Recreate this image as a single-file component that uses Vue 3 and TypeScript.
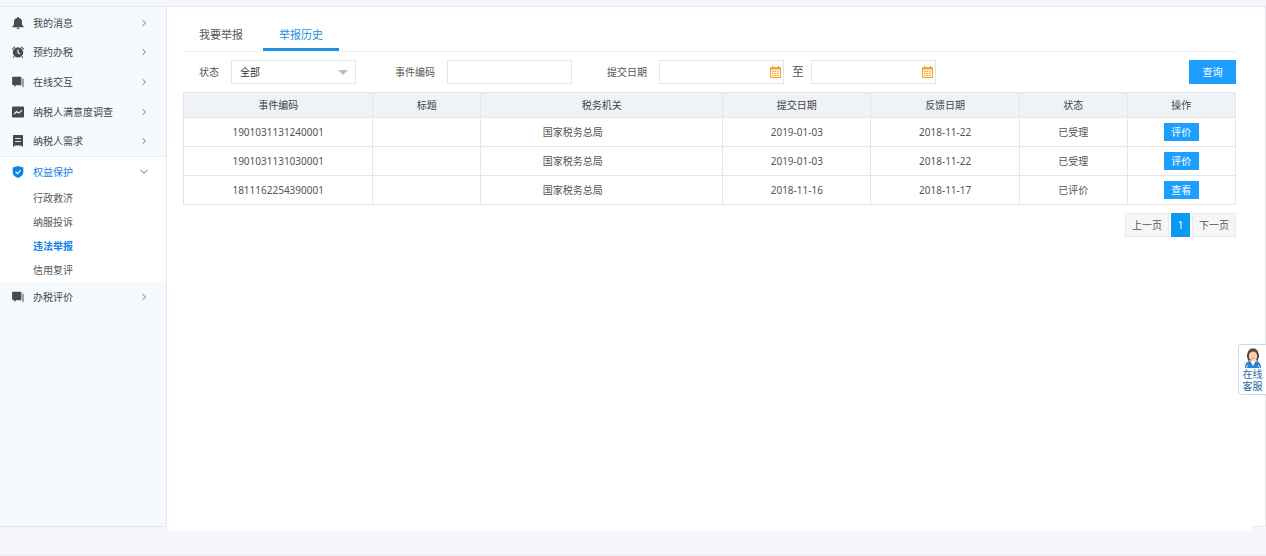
<script setup lang="ts">
import { ref } from 'vue'

type IconName = 'bell' | 'clock' | 'chat' | 'chart' | 'book'

interface MenuItem {
  label: string
  icon: IconName
}

interface Report {
  code: string
  title: string
  agency: string
  submitted: string
  replied: string
  status: string
  action: string
}

const menu: MenuItem[] = [
  { label: '我的消息', icon: 'bell' },
  { label: '预约办税', icon: 'clock' },
  { label: '在线交互', icon: 'chat' },
  { label: '纳税人满意度调查', icon: 'chart' },
  { label: '纳税人需求', icon: 'book' },
]

const submenu: string[] = ['行政救济', '纳服投诉', '违法举报', '信用复评']
const currentSub = ref('违法举报')

const tabs: string[] = ['我要举报', '举报历史']
const currentTab = ref('举报历史')

const status = ref('全部')
const eventCode = ref('')
const dateFrom = ref('')
const dateTo = ref('')

const columns: string[] = ['事件编码', '标题', '税务机关', '提交日期', '反馈日期', '状态', '操作']

const reports: Report[] = [
  { code: '1901031131240001', title: '', agency: '国家税务总局', submitted: '2019-01-03', replied: '2018-11-22', status: '已受理', action: '评价' },
  { code: '1901031131030001', title: '', agency: '国家税务总局', submitted: '2019-01-03', replied: '2018-11-22', status: '已受理', action: '评价' },
  { code: '1811162254390001', title: '', agency: '国家税务总局', submitted: '2018-11-16', replied: '2018-11-17', status: '已评价', action: '查看' },
]
</script>

<template>
  <div class="page">
    <div class="shell">
      <aside class="sidebar">
        <nav class="menu">
          <div class="menu-group">
            <a v-for="item in menu" :key="item.label" href="#" class="menu-item">
              <svg class="menu-icon" viewBox="0 0 12 12" aria-hidden="true">
                <g v-if="item.icon === 'bell'" fill="#4a4a4a">
                  <path d="M6 0a1 1 0 0 1 1 .9C9 1.300 10 2.800 10 4.600v3.200l1.600 1.600v.8H.4v-.8L2 7.800V4.600C2 2.800 3 1.300 5 .9A1 1 0 0 1 6 0z" />
                  <path d="M4.500 10.700h3a1.500 1.300 0 0 1-3 0z" />
                </g>
                <g v-else-if="item.icon === 'clock'">
                  <circle cx="6" cy="6.400" r="5.200" fill="#4a4a4a" />
                  <path d="M.4 3.400A6 6 0 0 1 3 .7M9 .7a6 6 0 0 1 2.600 2.700M2.200 10.300l-1.200 1.300M9.800 10.300l1.200 1.300" fill="none" stroke="#5a5a5a" stroke-width="1.200" />
                  <path d="M6 3.500v3.200l2 1.300" fill="none" stroke="#f5fafd" stroke-width="1.100" />
                </g>
                <g v-else-if="item.icon === 'chat'">
                  <path d="M.8.800h7.900a.7.7 0 0 1 .7.700v6.700a.7.7 0 0 1-.7.700H4.500L2.200 11V8.900H.8a.7.700 0 0 1-.7-.7V1.500A.7.700 0 0 1 .8.800z" fill="#4a4a4a" />
                  <path d="M10.200 2.500h.9a.7.7 0 0 1 .7.700v8.400l-2-1.600H5.600v-.4h4.600z" fill="#8b8e90" />
                </g>
                <g v-else-if="item.icon === 'chart'">
                  <rect x="0" y=".5" width="12" height="11" rx=".8" fill="#4a4a4a" />
                  <path d="M2 8l2.600-2.500 2.200 1.600L10 4.300" fill="none" stroke="#f5fafd" stroke-width="1.100" />
                </g>
                <g v-else>
                  <path d="M1.700 0h8.600a.7.7 0 0 1 .7.700V12L8.800 10.400H3.200L1 12V.7A.7.700 0 0 1 1.700 0z" fill="#4a4a4a" />
                  <path d="M3.200 3.500h5.600M3.200 6.500h5.600" stroke="#dfe4e8" stroke-width="1" />
                </g>
              </svg>
              <span class="menu-label">{{ item.label }}</span>
              <svg class="chevron" viewBox="0 0 8 8" aria-hidden="true"><path d="M2.500 1.200L5.500 4l-3 2.800" /></svg>
            </a>
          </div>
          <div class="menu-open">
            <a href="#" class="menu-item menu-item-active">
              <svg class="menu-icon" viewBox="0 0 12 12" aria-hidden="true">
                <path d="M6 0l5.300 1.600v4.700c0 2.700-2.300 4.700-5.300 5.700-3-1-5.300-3-5.300-5.700V1.600z" fill="#0f82e6" />
                <path d="M3.600 5.900l1.800 1.800 3.200-3.300" fill="none" stroke="#fff" stroke-width="1.200" />
              </svg>
              <span class="menu-label">权益保护</span>
              <svg class="chevron" viewBox="0 0 8 8" aria-hidden="true"><path d="M.5 2L4 5.300 7.500 2" /></svg>
            </a>
            <a
              v-for="name in submenu"
              :key="name"
              href="#"
              class="sub-item"
              :class="{ 'sub-item-active': name === currentSub }"
              @click.prevent="currentSub = name"
            >{{ name }}</a>
          </div>
          <a href="#" class="menu-item">
            <svg class="menu-icon" viewBox="0 0 12 12" aria-hidden="true">
              <path d="M.8.800h7.900a.7.7 0 0 1 .7.700v6.700a.7.7 0 0 1-.7.700H4.500L2.200 11V8.900H.8a.7.700 0 0 1-.7-.7V1.500A.7.700 0 0 1 .8.800z" fill="#4a4a4a" />
              <path d="M10.200 2.500h.9a.7.7 0 0 1 .7.700v8.400l-2-1.600H5.600v-.4h4.600z" fill="#8b8e90" />
            </svg>
            <span class="menu-label">办税评价</span>
            <svg class="chevron" viewBox="0 0 8 8" aria-hidden="true"><path d="M2.500 1.200L5.500 4l-3 2.800" /></svg>
          </a>
        </nav>
      </aside>

      <main class="content">
        <div class="tabs">
          <button
            v-for="tab in tabs"
            :key="tab"
            type="button"
            class="tab"
            :class="{ 'tab-active': tab === currentTab }"
            @click="currentTab = tab"
          >{{ tab }}</button>
        </div>

        <form class="filters" @submit.prevent>
          <div class="field field-status">
            <label for="status">状态</label>
            <span class="control">
              <select id="status" v-model="status" class="box">
                <option>全部</option>
                <option>已受理</option>
                <option>已评价</option>
              </select>
              <svg class="caret" viewBox="0 0 10 5" aria-hidden="true"><path d="M0 0h10L5 5z" fill="#bdbdbd" /></svg>
            </span>
          </div>
          <div class="field field-code">
            <label for="code">事件编码</label>
            <span class="control"><input id="code" v-model="eventCode" type="text" class="box" /></span>
          </div>
          <div class="field">
            <label for="from">提交日期</label>
            <span class="control">
              <input id="from" v-model="dateFrom" type="text" class="box" />
              <svg class="calendar" viewBox="0 0 11 12" aria-hidden="true">
                <rect x=".5" y="1.500" width="10" height="10" fill="#fff1cf" stroke="#f0a63c" />
                <path d="M0 1h11v2.500H0z" fill="#f0a63c" />
                <path d="M2.500 0v2M8.500 0v2" stroke="#f0a63c" />
                <path d="M2 5.500h7M2 7.500h7M2 9.500h7" stroke="#f0a63c" stroke-width="1" stroke-dasharray="1.500 1" />
              </svg>
            </span>
          </div>
          <div class="range">
            <label for="to">至</label>
            <span class="control">
              <input id="to" v-model="dateTo" type="text" class="box" />
              <svg class="calendar" viewBox="0 0 11 12" aria-hidden="true">
                <rect x=".5" y="1.500" width="10" height="10" fill="#fff1cf" stroke="#f0a63c" />
                <path d="M0 1h11v2.500H0z" fill="#f0a63c" />
                <path d="M2.500 0v2M8.500 0v2" stroke="#f0a63c" />
                <path d="M2 5.500h7M2 7.500h7M2 9.500h7" stroke="#f0a63c" stroke-width="1" stroke-dasharray="1.500 1" />
              </svg>
            </span>
          </div>
          <button type="submit" class="query">查询</button>
        </form>

        <table class="grid">
          <colgroup>
            <col class="w-code" />
            <col class="w-small" />
            <col class="w-agency" />
            <col class="w-date" />
            <col class="w-date" />
            <col class="w-small" />
            <col />
          </colgroup>
          <thead>
            <tr>
              <th v-for="name in columns" :key="name" scope="col">{{ name }}</th>
            </tr>
          </thead>
          <tbody>
            <tr v-for="row in reports" :key="row.code">
              <td>{{ row.code }}</td>
              <td>{{ row.title }}</td>
              <td class="agency">{{ row.agency }}</td>
              <td>{{ row.submitted }}</td>
              <td>{{ row.replied }}</td>
              <td>{{ row.status }}</td>
              <td><button type="button" class="action">{{ row.action }}</button></td>
            </tr>
          </tbody>
        </table>

        <div class="pager">
          <button type="button" class="pager-step">上一页</button>
          <button type="button" class="pager-current" aria-current="page">1</button>
          <button type="button" class="pager-step">下一页</button>
        </div>
      </main>
    </div>

    <a href="#" class="service">
      <svg class="agent" viewBox="0 0 18 20" aria-hidden="true">
        <path d="M1 20c0-4.500 2-6.300 5-7h6c3 .7 5 2.500 5 7z" fill="#2f86cc" />
        <path d="M6 12.500h6L9 18z" fill="#fff" />
        <path d="M4 13C3 5 4 1 9 1s6 4 5 12l-2.500-1h-5z" fill="#70452f" />
        <ellipse cx="9" cy="8" rx="4.200" ry="5.200" fill="#f8d2b3" />
        <path d="M5 7c.3-2.400 2-3.300 4.500-3.500C11.500 4 12.800 5 13 7c1-4-1-6-4-6S4 3 5 7z" fill="#70452f" />
        <path d="M3.800 8V6C4 2.500 6 .7 9 .7s5 1.800 5.200 5.300v2" fill="none" stroke="#454545" stroke-width=".8" />
        <rect x="3" y="6.500" width="1.800" height="3.500" rx=".8" fill="#444" />
        <rect x="13.200" y="6.500" width="1.800" height="3.500" rx=".8" fill="#444" />
        <path d="M4 10c.6 1.500 2 2 3.500 2" fill="none" stroke="#444" stroke-width=".8" />
        <path d="M7.800 10.300h2.400" stroke="#d46a5c" stroke-width=".8" />
        <path d="M2.500 20l1-3M15.500 20l-1-3" stroke="#fff" stroke-width=".7" />
      </svg>
      <span>在线</span>
      <span>客服</span>
    </a>
  </div>
</template>

<style>
body {
  margin: 0;
  background: #f4f6fb;
}
</style>

<style scoped>
.page {
  box-sizing: border-box;
  display: flex;
  flex-direction: column;
  min-height: 100vh;
  padding: 6px 0 24px;
  border-bottom: 1px solid #ececf0;
  background: #f4f6fb;
  color: #555;
  font-family: "Noto Sans", "Noto Sans CJK SC", sans-serif;
  font-size: 10px;
  line-height: 16px;
}

.page *,
.page *::before,
.page *::after {
  box-sizing: border-box;
}

a {
  color: inherit;
  text-decoration: none;
}

button,
input,
select {
  margin: 0;
  padding: 0;
  border: 0;
  border-radius: 0;
  background: none;
  color: inherit;
  font: inherit;
}

button {
  cursor: pointer;
}

.shell {
  display: flex;
  flex: 1;
  border-top: 1px solid #e8e9ee;
}

.sidebar {
  flex: none;
  width: 167px;
  margin-bottom: 4px;
  border-right: 1px solid #e6eaef;
  border-bottom: 1px solid #e6eaef;
  background: #f5fafe;
}

.menu {
  display: flex;
  flex-direction: column;
  padding-top: 1px;
}

.menu-group {
  display: grid;
  grid-auto-rows: 1fr;
  height: 148px;
}

.menu-item {
  display: flex;
  align-items: center;
  min-height: 0;
  padding: 0 18px 0 12px;
  color: #444;
}

.menu-open .menu-item {
  height: 29px;
}

.menu > .menu-item {
  height: 30px;
}

.menu-icon {
  flex: none;
  width: 12px;
  height: 12px;
  margin-right: 9px;
}

.menu-label {
  flex: 1;
}

.chevron {
  width: 8px;
  height: 8px;
  fill: none;
  stroke: #777;
  stroke-width: 1;
}

.menu-open {
  display: flex;
  flex-direction: column;
  border-top: 1px solid #eaeef3;
  background: #fff;
}

.menu-item-active {
  color: #0f82e6;
}

.menu-item-active .chevron {
  stroke: #0f82e6;
}

.sub-item {
  padding: 4px 0 4px 33px;
}

.sub-item-active {
  color: #0f82e6;
  font-weight: 700;
}

.content {
  position: relative;
  flex: 1;
  min-width: 0;
  padding: 11px 29px 0 16px;
  border-right: 1px solid #e9eaee;
  background: #fff;
}

/* Cut-out in the lower right corner of the panel */
.content::after {
  content: "";
  position: absolute;
  right: -1px;
  bottom: 0;
  width: 15px;
  height: 5px;
  border-top: 1px solid #e9eaee;
  background: #f6f7fb;
}

.tabs {
  display: flex;
  gap: 4px;
  border-bottom: 1px solid #f0f0f0;
}

.tab {
  height: 33px;
  padding: 3px 16px 0;
  border-bottom: 3px solid transparent;
  font-size: 11px;
}

.tab-active {
  border-bottom-color: #1f92dc;
  color: #1b8fe0;
}

.filters {
  display: flex;
  align-items: center;
  padding: 8px 0 8px 16px;
}

.field,
.range {
  display: flex;
  align-items: center;
  gap: 12px;
}

.field-status {
  margin-right: 39px;
}

.field-code {
  margin-right: 35px;
}

.range {
  gap: 7px;
  margin-left: 8px;
  font-size: 12px;
}

.control {
  position: relative;
  display: flex;
  width: 125px;
}

.box {
  width: 100%;
  height: 24px;
  padding: 0 8px;
  border: 1px solid #e3e5e8;
  background: #fff;
  color: #333;
  font-size: 10px;
  appearance: none;
}

.caret {
  position: absolute;
  top: 10px;
  right: 8px;
  width: 10px;
  height: 5px;
  pointer-events: none;
}

.calendar {
  position: absolute;
  top: 6px;
  right: 3px;
  width: 11px;
  height: 12px;
  pointer-events: none;
}

.query {
  width: 47px;
  height: 24px;
  margin-left: auto;
  background: #1e9fff;
  color: #fff;
}

.grid {
  width: 100%;
  border-collapse: collapse;
  table-layout: fixed;
  text-align: center;
}

.w-code {
  width: 18%;
}

.w-small {
  width: 10.25%;
}

.w-agency {
  width: 23%;
}

.w-date {
  width: 14.1%;
}

th,
td {
  padding: 0;
  border: 1px solid #e3e5e8;
}

th {
  height: 25px;
  background: #eff3f7;
  color: #444;
  font-weight: 400;
}

td {
  height: 29px;
}

.agency {
  padding-right: 58px;
}

.action {
  display: block;
  width: 35px;
  height: 18px;
  margin: 0 auto;
  background: #1e9fff;
  color: #fff;
}

.pager {
  display: flex;
  justify-content: flex-end;
  gap: 2px;
  margin-top: 8px;
}

.pager-step {
  height: 24px;
  padding: 0 6px;
  border: 1px solid #e8e9ec;
  background: #f6f6f8;
}

.pager-current {
  width: 19px;
  height: 24px;
  background: #0a99f5;
  color: #fff;
}

.service {
  position: fixed;
  top: 344px;
  right: 0;
  display: flex;
  flex-direction: column;
  align-items: center;
  width: 28px;
  padding: 3px 0 2px;
  border: 1px solid #c5dcee;
  border-right: 0;
  border-radius: 4px 0 0 4px;
  background: #fff;
  color: #2368a8;
  line-height: 12px;
}

.agent {
  width: 18px;
  height: 20px;
}
</style>
